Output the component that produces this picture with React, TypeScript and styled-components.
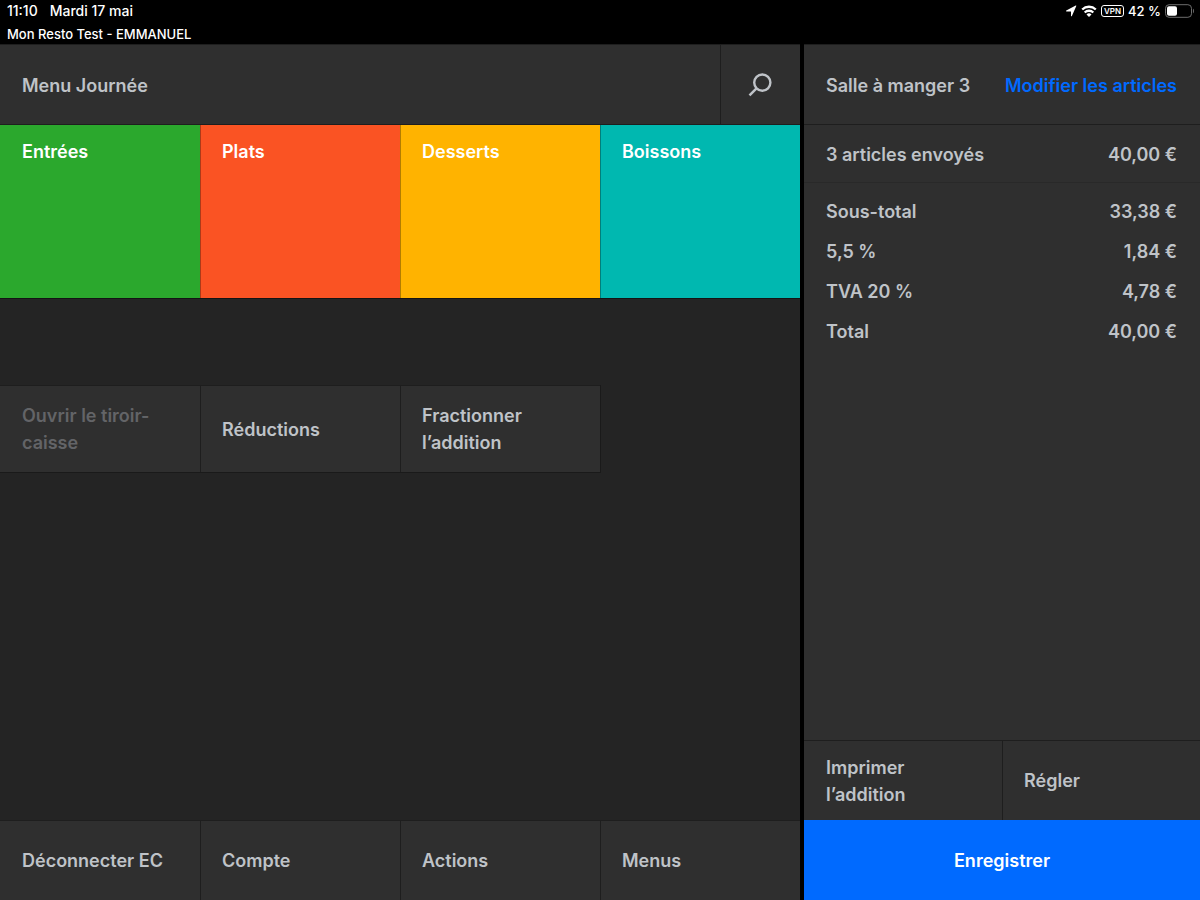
import React from "react";
import styled, { createGlobalStyle, css } from "styled-components";

const color = {
  panel: "#2f2f2f",
  canvas: "#242424",
  line: "#1e1e1e",
  text: "#bfc3c8",
  muted: "#636467",
  blue: "#006aff",
};

const GlobalStyle = createGlobalStyle`
  *, *::before, *::after { box-sizing: border-box; }
  body {
    margin: 0;
    background: #000;
    color: ${color.text};
    font-family: Inter, "Liberation Sans", sans-serif;
    font-size: 18px;
    font-weight: 600;
    line-height: 27px;
  }
  h1, h2, dl, dd, p { margin: 0; font: inherit; }
  button { border: 0; margin: 0; font: inherit; color: inherit; cursor: pointer; }
`;

const Page = styled.div`
  display: grid;
  grid-template-rows: 44px 1fr;
  min-height: 100vh;
`;

const StatusBar = styled.header`
  display: flex;
  justify-content: space-between;
  padding: 0 6px 0 7px;
  color: #fff;
  font-size: 13px;
  font-weight: 500;
  line-height: 22px;
`;

const StatusLine = styled.div`
  display: flex;
  gap: 12px;
  font-size: 14px;
`;

const DeviceState = styled.div`
  display: flex;
  align-items: center;
  gap: 4px;
  height: 22px;
`;

const AppName = styled.p`
  font-size: 13px;
  line-height: 24px;
`;

const Columns = styled.div`
  display: grid;
  grid-template-columns: 2fr 1fr;
`;

const MenuPane = styled.main`
  display: flex;
  flex-direction: column;
  background: ${color.canvas};
`;

const TicketPane = styled.aside`
  display: flex;
  flex-direction: column;
  border-left: 4px solid #000;
  background: ${color.panel};
`;

const PaneHeader = styled.div`
  display: flex;
  align-items: center;
  justify-content: space-between;
  height: 81px;
  border-top: 1px solid ${color.line};
  border-bottom: 1px solid ${color.line};
  background: ${color.panel};
`;

const PaneTitle = styled.h1`
  padding: 2px 0 0 22px;
`;

const SearchButton = styled.button`
  display: grid;
  place-items: center;
  align-self: stretch;
  width: 80px;
  padding: 0;
  background: none;
  box-shadow: inset 1px 0 ${color.line};
`;

const EditLink = styled.a`
  padding: 2px 23px 0 0;
  color: ${color.blue};
  text-decoration: none;
`;

const TileGrid = styled.nav`
  display: grid;
  grid-template-columns: repeat(4, 1fr);
  border-bottom: 1px solid #141414;
`;

const Tile = styled.button<{ $fill: string }>`
  display: flex;
  align-items: flex-start;
  height: 173px;
  padding: 13px 22px;
  background: ${(p) => p.$fill};
  color: #fff;
  text-align: left;

  & + & {
    box-shadow: inset 1px 0 rgba(0, 0, 0, 0.3);
  }
`;

const ButtonRow = styled.div<{ $columns: number }>`
  display: grid;
  grid-template-columns: repeat(${(p) => p.$columns}, 1fr);
  border-top: 1px solid ${color.line};
`;

const CheckActions = styled(ButtonRow)`
  width: 75%;
  margin-top: 86px;
  border-bottom: 1px solid #1a1a1a;
  box-shadow: 1px 0 #1a1a1a;
`;

const BottomBar = styled(ButtonRow)`
  margin-top: auto;
`;

const RowButton = styled.button<{ $tall?: boolean }>`
  height: ${(p) => (p.$tall ? 86 : 79)}px;
  padding: 0 22px;
  background: ${color.panel};
  text-align: left;

  & + & {
    box-shadow: inset 1px 0 ${color.line};
  }

  ${(p) =>
    p.disabled &&
    css`
      color: ${color.muted};
      cursor: default;
    `}
`;

const SentRow = styled.div`
  display: flex;
  align-items: center;
  justify-content: space-between;
  height: 58px;
  padding: 2px 23px 0 22px;
  border-bottom: 1px solid #292929;
`;

const Totals = styled.dl`
  padding: 8px 23px 0 22px;
`;

const TotalRow = styled.div`
  display: flex;
  align-items: center;
  justify-content: space-between;
  height: 40px;
`;

const SaveButton = styled.button`
  height: 80px;
  background: ${color.blue};
  color: #fff;
`;

const LocationIcon = () => (
  <svg width="12" height="12" viewBox="0 0 12 12" fill="#fff" aria-hidden="true">
    <path d="M11.300 1.100 6.900 10.900c-.25.500-.9.400-.9-.2V6.800c0-.2-.1-.3-.3-.3H1.500c-.6 0-.7-.7-.2-.9L10.700.500c.5-.2.800.1.600.6Z" />
  </svg>
);

const WifiIcon = () => (
  <svg width="16" height="12" viewBox="0 0 16 12" fill="none" stroke="#fff" strokeWidth="2.300" aria-hidden="true">
    <path d="M1.200 4.500a9.800 9.800 0 0 1 13.600 0" />
    <path d="M3.700 7.500a6.200 6.200 0 0 1 8.600 0" />
    <path d="M8 12 5.500 9.500a3.600 3.600 0 0 1 5 0Z" fill="#fff" stroke="none" />
  </svg>
);

const VpnBadge = styled.span`
  display: grid;
  place-items: center;
  width: 23px;
  height: 12px;
  border: 1px solid #fff;
  border-radius: 3px;
  font-size: 8px;
  font-weight: 600;
  line-height: 10px;
`;

const BatteryIcon = () => (
  <svg width="29" height="14" viewBox="0 0 29 14" role="img" aria-label="Batterie">
    <rect x="0.500" y="0.700" width="26" height="12.600" rx="3.600" fill="none" stroke="#6d6d6d" />
    <rect x="2" y="2.200" width="10" height="9.600" rx="2" fill="#fff" />
    <path d="M28 4.800c1.200.5 1.200 3.900 0 4.400Z" fill="#777" />
  </svg>
);

const SearchIcon = () => (
  <svg width="24" height="24" viewBox="0 0 24 24" fill="none" stroke={color.text} strokeWidth="2.400" aria-hidden="true">
    <circle cx="14.300" cy="9.600" r="8.100" />
    <path d="M8.500 15.400 1.500 22.400" />
  </svg>
);

const categories = [
  { name: "Entrées", fill: "#2ba82d" },
  { name: "Plats", fill: "#fa5323" },
  { name: "Desserts", fill: "#ffb300" },
  { name: "Boissons", fill: "#00b8b0" },
];

const totals = [
  ["Sous-total", "33,38 €"],
  ["5,5 %", "1,84 €"],
  ["TVA 20 %", "4,78 €"],
  ["Total", "40,00 €"],
];

export default function App() {
  return (
    <>
      <GlobalStyle />
      <Page>
        <StatusBar>
          <div>
            <StatusLine>
              <span>11:10</span>
              <span>Mardi 17 mai</span>
            </StatusLine>
            <AppName>Mon Resto Test - EMMANUEL</AppName>
          </div>
          <DeviceState>
            <LocationIcon />
            <WifiIcon />
            <VpnBadge>VPN</VpnBadge>
            <span>42 %</span>
            <BatteryIcon />
          </DeviceState>
        </StatusBar>
        <Columns>
          <MenuPane>
            <PaneHeader>
              <PaneTitle>Menu Journée</PaneTitle>
              <SearchButton aria-label="Rechercher">
                <SearchIcon />
              </SearchButton>
            </PaneHeader>
            <TileGrid>
              {categories.map((c) => (
                <Tile key={c.name} $fill={c.fill}>
                  {c.name}
                </Tile>
              ))}
            </TileGrid>
            <CheckActions $columns={3}>
              <RowButton $tall disabled>
                Ouvrir le tiroir-caisse
              </RowButton>
              <RowButton $tall>Réductions</RowButton>
              <RowButton $tall>Fractionner l’addition</RowButton>
            </CheckActions>
            <BottomBar $columns={4}>
              <RowButton>Déconnecter EC</RowButton>
              <RowButton>Compte</RowButton>
              <RowButton>Actions</RowButton>
              <RowButton>Menus</RowButton>
            </BottomBar>
          </MenuPane>
          <TicketPane>
            <PaneHeader>
              <PaneTitle as="h2">Salle à manger 3</PaneTitle>
              <EditLink href="#articles">Modifier les articles</EditLink>
            </PaneHeader>
            <SentRow>
              <span>3 articles envoyés</span>
              <span>40,00 €</span>
            </SentRow>
            <Totals>
              {totals.map(([label, amount]) => (
                <TotalRow key={label}>
                  <dt>{label}</dt>
                  <dd>{amount}</dd>
                </TotalRow>
              ))}
            </Totals>
            <BottomBar $columns={2}>
              <RowButton>Imprimer l’addition</RowButton>
              <RowButton>Régler</RowButton>
            </BottomBar>
            <SaveButton>Enregistrer</SaveButton>
          </TicketPane>
        </Columns>
      </Page>
    </>
  );
}
